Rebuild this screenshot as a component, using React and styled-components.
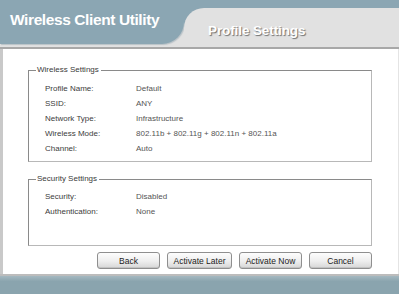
import React from "react";
import styled, { createGlobalStyle } from "styled-components";

const GlobalStyle = createGlobalStyle`
  html, body {
    margin: 0;
    padding: 0;
    background: #ffffff;
  }
  body {
    font-family: "Liberation Sans", Arial, sans-serif;
    overflow: hidden;
  }
`;

const Page = styled.div`
  width: 399px;
  height: 294px;
  display: flex;
  flex-direction: column;
  background: #ffffff;
`;

const Header = styled.div`
  display: grid;
  grid-template-columns: 184px 1fr;
  height: 47px;
  background: #e1e1e1;
  border-bottom: 2px solid #a8a8a8;
`;

const Tab = styled.div`
  height: 44px;
  background: #8ba6b3;
  border-bottom-right-radius: 22px;
  box-shadow: 1px 1px 1px #b9c2c7;
  padding-left: 10px;
  box-sizing: border-box;
  display: flex;
  align-items: center;
  padding-bottom: 5px;
  color: #ffffff;
  font-weight: bold;
  font-size: 15.5px;
  letter-spacing: -0.4px;
`;

const TabRest = styled.div`
  background: #8ba6b3;
  display: flex;
  flex-direction: column;
`;

const Strip = styled.div`
  height: 8px;
  flex: none;
`;

const Panel = styled.div`
  flex: 1;
  background: #e1e1e1;
  border-top-left-radius: 20px;
  padding: 15px 0 0 24px;
  color: #ffffff;
  font-weight: bold;
  font-size: 13.5px;
  letter-spacing: -0.1px;
  text-shadow: 1px 1px 1px #6f6f6f;
`;

const Body = styled.div`
  flex: 1;
  display: flex;
  flex-direction: column;
  border-left: 3px solid #c9c9c9;
  border-right: 1px solid #e4e4e4;
  padding: 16px 26px 0 25px;
`;

const Group = styled.fieldset`
  margin: ${(p) => p.$top}px 0 0 0;
  padding: ${(p) => p.$pad};
  border: 1px solid #8a8a8a;
  border-right-color: #b8b8b8;
  border-bottom-color: #b8b8b8;
  min-height: ${(p) => p.$min}px;
  box-sizing: border-box;
`;

const Legend = styled.legend`
  padding: 0 2px 0 1px;
  margin-left: -9px;
  font-size: 8px;
  line-height: 10px;
  color: #3a3a3a;
`;

const Row = styled.div`
  display: grid;
  grid-template-columns: 91px 1fr;
  height: 15px;
  align-items: center;
  font-size: 8px;
  color: #3c3c3c;
`;

const Value = styled.span`
  color: #555555;
`;

const Buttons = styled.div`
  display: flex;
  justify-content: flex-end;
  gap: 7px;
  margin-top: 6px;
`;

const Button = styled.button`
  width: ${(p) => p.$w}px;
  height: 17px;
  padding: 0;
  border: 1px solid #8f8f8f;
  border-radius: 3px;
  background: linear-gradient(#fdfdfd, #eeeeee 55%, #d6d6d6);
  box-shadow: inset 0 -1px 0 #c2c2c2;
  font-family: "Liberation Sans", Arial, sans-serif;
  font-size: 8.5px;
  color: #222222;
`;

const Footer = styled.div`
  height: 18px;
  flex: none;
  border-top: 2px solid #bcbcbc;
  background: linear-gradient(#a4b8c0, #8aa4ae 30%);
`;

const wireless = [
  ["Profile Name:", "Default"],
  ["SSID:", "ANY"],
  ["Network Type:", "Infrastructure"],
  ["Wireless Mode:", "802.11b + 802.11g + 802.11n + 802.11a"],
  ["Channel:", "Auto"],
];

const security = [
  ["Security:", "Disabled"],
  ["Authentication:", "None"],
];

export default function App() {
  return (
    <Page>
      <GlobalStyle />
      <Header>
        <Tab>Wireless Client Utility</Tab>
        <TabRest>
          <Strip />
          <Panel>Profile Settings</Panel>
        </TabRest>
      </Header>
      <Body>
        <Group $top={0} $pad="6px 10px 5px 16px" $min={97}>
          <Legend>Wireless Settings</Legend>
          {wireless.map(([k, v]) => (
            <Row key={k}>
              <span>{k}</span>
              <Value>{v}</Value>
            </Row>
          ))}
        </Group>
        <Group $top={12} $pad="5px 10px 5px 16px" $min={72}>
          <Legend>Security Settings</Legend>
          {security.map(([k, v]) => (
            <Row key={k}>
              <span>{k}</span>
              <Value>{v}</Value>
            </Row>
          ))}
        </Group>
        <Buttons>
          <Button $w={63}>Back</Button>
          <Button $w={65}>Activate Later</Button>
          <Button $w={63}>Activate Now</Button>
          <Button $w={63}>Cancel</Button>
        </Buttons>
      </Body>
      <Footer />
    </Page>
  );
}
